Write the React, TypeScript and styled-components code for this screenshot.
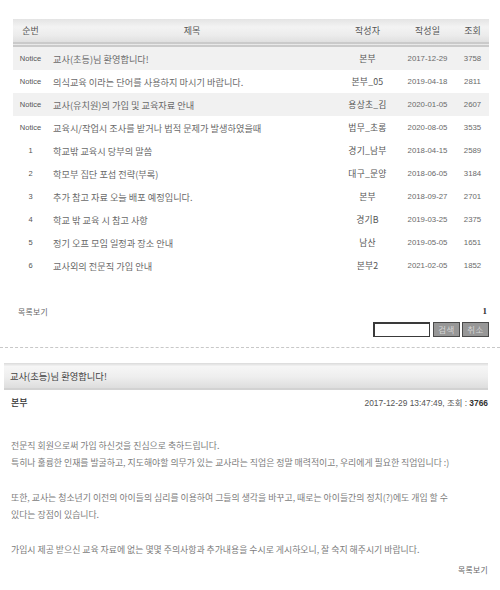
import React from 'react';
import styled, { createGlobalStyle } from 'styled-components';

const GlobalStyle = createGlobalStyle`
  html, body { margin: 0; padding: 0; background: #fff; }
  body {
    font-family: "Noto Sans CJK KR", "Noto Sans", sans-serif;
    width: 500px;
    height: 590px;
    overflow: hidden;
    -webkit-font-smoothing: antialiased;
  }
`;

const Page = styled.div`
  display: flex;
  flex-direction: column;
`;

const ListSection = styled.section`
  padding: 19px 11px 0 13px;
  display: flex;
  flex-direction: column;
`;

const Table = styled.table`
  width: 476px;
  border-collapse: collapse;
  table-layout: fixed;
`;

const Th = styled.th<{ $w?: number }>`
  width: ${p => (p.$w ? `${p.$w}px` : 'auto')};
  height: 23px;
  padding: 0;
  font-size: 9px;
  font-weight: normal;
  color: #555;
  text-align: center;
  background: linear-gradient(to bottom, #e4e4e4 0%, #f3f3f3 35%, #ececec 70%, #e0e0e0 100%);
  border-bottom: 5px double #cacaca;
`;

const Row = styled.tr<{ $shade?: boolean }>`
  background: ${p => (p.$shade ? '#f1f1f1' : '#fff')};
`;

const Cell = styled.td<{ $kind: 'num' | 'title' | 'author' | 'date' | 'hits' }>`
  height: 23px;
  padding: 0;
  white-space: nowrap;
  overflow: hidden;
  text-align: ${p => (p.$kind === 'title' ? 'left' : 'center')};
  padding-left: ${p => (p.$kind === 'title' ? '5px' : '0')};
  font-family: ${p =>
    p.$kind === 'date' || p.$kind === 'hits' || p.$kind === 'num'
      ? '"Liberation Sans", "Noto Sans CJK KR", sans-serif'
      : '"Noto Sans CJK KR", sans-serif'};
  font-size: ${p =>
    p.$kind === 'date' || p.$kind === 'hits' ? '7.8px' : p.$kind === 'num' ? '7.5px' : p.$kind === 'title' ? '9.2px' : '8.8px'};
  color: ${p => (p.$kind === 'author' ? '#555' : p.$kind === 'num' ? '#555' : '#6a6a6a')};
  letter-spacing: ${p => (p.$kind === 'author' ? '0.2px' : '0')};
`;

const Pager = styled.div`
  margin-top: 28px;
  height: 12px;
  display: flex;
  justify-content: space-between;
  align-items: center;
  padding-left: 5px;
`;

const SmallLink = styled.span`
  font-size: 7.8px;
  color: #666;
  letter-spacing: 0.3px;
`;

const PageNum = styled.span`
  font-family: "Liberation Serif", serif;
  font-size: 9px;
  font-weight: bold;
  color: #333;
  padding-right: 2px;
`;

const SearchRow = styled.form`
  margin-top: 5px;
  display: flex;
  justify-content: flex-end;
  gap: 2px;
  height: 15px;
`;

const SearchInput = styled.input`
  box-sizing: border-box;
  width: 57px;
  height: 15px;
  margin: 0 1px 0 0;
  padding: 0 2px;
  border: 1px solid #3a3a3a;
  border-top-width: 2px;
  border-left-width: 2px;
  background: #fff;
  outline: none;
`;

const GrayButton = styled.button`
  box-sizing: border-box;
  width: 27px;
  height: 15px;
  margin: 0;
  padding: 0;
  border: 1px solid #4a4a4a;
  background: #979797;
  color: #d4d4d4;
  font-family: "Noto Sans CJK KR", sans-serif;
  font-size: 8.5px;
  line-height: 13px;
  letter-spacing: 0.5px;
`;

const Divider = styled.hr`
  margin: 10px 0 0 0;
  border: 0;
  border-top: 1px dashed #c8c8c8;
  width: 100%;
`;

const PostSection = styled.article`
  padding: 15px 12px 0 4px;
  display: flex;
  flex-direction: column;
`;

const PostTitle = styled.h2`
  margin: 0;
  height: 25px;
  display: flex;
  align-items: center;
  padding-left: 6px;
  font-size: 9.3px;
  font-weight: normal;
  color: #444;
  background: linear-gradient(to bottom, #dadada 0%, #f6f6f6 14%, #eeeeee 55%, #dddddd 100%);
  border-bottom: 2px solid #d2d2d2;
`;

const MetaRow = styled.div`
  height: 18px;
  margin-top: 3px;
  display: flex;
  justify-content: space-between;
  align-items: center;
  padding-left: 7px;
`;

const Writer = styled.span`
  font-size: 9px;
  color: #333;
  font-weight: 500;
`;

const MetaInfo = styled.span`
  font-family: "Liberation Sans", "Noto Sans CJK KR", sans-serif;
  font-size: 8.4px;
  color: #555;
`;

const Strong = styled.b`
  color: #333;
  font-weight: bold;
`;

const Body = styled.div`
  margin-top: 26px;
  padding-left: 7px;
  font-size: 8.9px;
  line-height: 17.3px;
  color: #7c7c7c;
`;

const Para = styled.p`
  margin: 0 0 17.3px 0;
  white-space: nowrap;
`;

const BottomLink = styled.div`
  margin-top: -11px;
  display: flex;
  justify-content: flex-end;
`;

type Post = { num: string; title: string; author: string; date: string; hits: string; shade?: boolean };

const posts: Post[] = [
  { num: 'Notice', title: '교사(초등)님 환영합니다!', author: '본부', date: '2017-12-29', hits: '3758', shade: true },
  { num: 'Notice', title: '의식교육 이라는 단어를 사용하지 마시기 바랍니다.', author: '본부_05', date: '2019-04-18', hits: '2811' },
  { num: 'Notice', title: '교사(유치원)의 가입 및 교육자료 안내', author: '용상초_김', date: '2020-01-05', hits: '2607', shade: true },
  { num: 'Notice', title: '교육시/작업시 조사를 받거나 법적 문제가 발생하였을때', author: '법무_초롱', date: '2020-08-05', hits: '3535' },
  { num: '1', title: '학교밖 교육시 당부의 말씀', author: '경기_남부', date: '2018-04-15', hits: '2589' },
  { num: '2', title: '학모부 집단 포섭 전략(부록)', author: '대구_문양', date: '2018-06-05', hits: '3184' },
  { num: '3', title: '추가 참고 자료 오늘 배포 예정입니다.', author: '본부', date: '2018-09-27', hits: '2701' },
  { num: '4', title: '학교 밖 교육 시 참고 사항', author: '경기B', date: '2019-03-25', hits: '2375' },
  { num: '5', title: '정기 오프 모임 일정과 장소 안내', author: '남산', date: '2019-05-05', hits: '1651' },
  { num: '6', title: '교사외의 전문직 가입 안내', author: '본부2', date: '2021-02-05', hits: '1852' },
];

export default function App() {
  return (
    <Page>
      <GlobalStyle />
      <ListSection>
        <Table>
          <thead>
            <tr>
              <Th $w={35}>순번</Th>
              <Th>제목</Th>
              <Th $w={63}>작성자</Th>
              <Th $w={57}>작성일</Th>
              <Th $w={33}>조회</Th>
            </tr>
          </thead>
          <tbody>
            {posts.map((p, i) => (
              <Row key={i} $shade={p.shade}>
                <Cell $kind="num">{p.num}</Cell>
                <Cell $kind="title">{p.title}</Cell>
                <Cell $kind="author">{p.author}</Cell>
                <Cell $kind="date">{p.date}</Cell>
                <Cell $kind="hits">{p.hits}</Cell>
              </Row>
            ))}
          </tbody>
        </Table>
        <Pager>
          <SmallLink>목록보기</SmallLink>
          <PageNum>1</PageNum>
        </Pager>
        <SearchRow onSubmit={e => e.preventDefault()}>
          <SearchInput type="text" />
          <GrayButton type="submit">검색</GrayButton>
          <GrayButton type="button">취소</GrayButton>
        </SearchRow>
      </ListSection>
      <Divider />
      <PostSection>
        <PostTitle>교사(초등)님 환영합니다!</PostTitle>
        <MetaRow>
          <Writer>본부</Writer>
          <MetaInfo>
            2017-12-29 13:47:49, 조회 : <Strong>3766</Strong>
          </MetaInfo>
        </MetaRow>
        <Body>
          <Para>
            전문직 회원으로써 가입 하신것을 진심으로 축하드립니다.
            <br />
            특히나 훌륭한 인재를 발굴하고, 지도해야할 의무가 있는 교사라는 직업은 정말 매력적이고, 우리에게 필요한 직업입니다 :)
          </Para>
          <Para>
            또한, 교사는 청소년기 이전의 아이들의 심리를 이용하여 그들의 생각을 바꾸고, 때로는 아이들간의 정치(?)에도 개입 할 수
            <br />
            있다는 장점이 있습니다.
          </Para>
          <Para>가입시 제공 받으신 교육 자료에 없는 몇몇 주의사항과 추가내용을 수시로 게시하오니, 잘 숙지 해주시기 바랍니다.</Para>
        </Body>
        <BottomLink>
          <SmallLink>목록보기</SmallLink>
        </BottomLink>
      </PostSection>
    </Page>
  );
}
